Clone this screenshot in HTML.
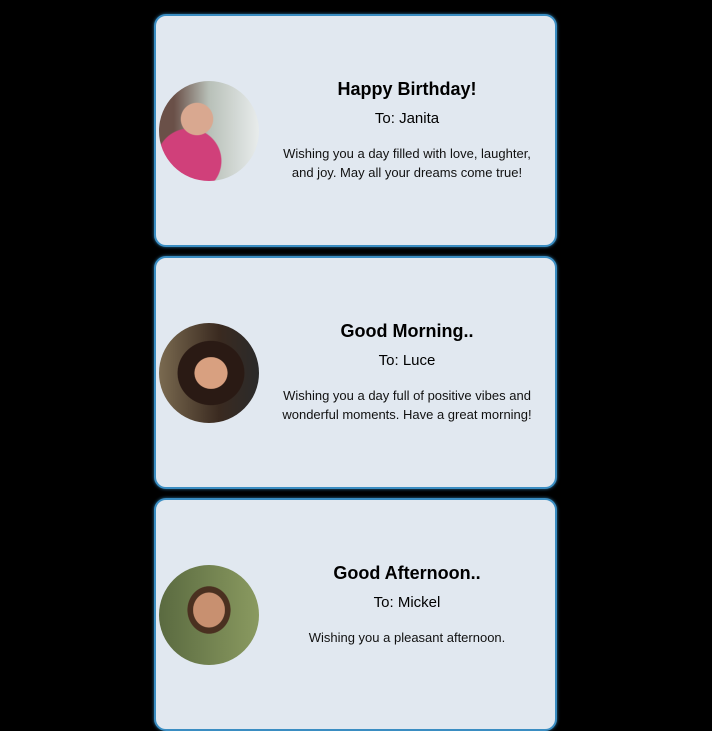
<!DOCTYPE html>
<html><head><style>
html,body{margin:0;background:#000;width:712px;height:612px;overflow:hidden;font-family:"Liberation Sans",sans-serif;}
.card{position:absolute;left:154px;width:399px;height:229px;background:#e1e8f0;border:2px solid #3a8dc2;border-radius:12px;box-shadow:0 0 3px #2a6f9a;}
.av{position:absolute;left:3px;top:65px;width:100px;height:100px;border-radius:50%;}
.txt{position:absolute;left:115px;width:272px;top:61px;text-align:center;color:#000;}
h2{margin:0;font-size:18px;font-weight:bold;line-height:24px;}
h3{margin:7px 0 0;font-size:15px;line-height:22px;font-weight:normal}
p{margin:14px 0 0;font-size:13px;line-height:19px;color:#111;}
</style></head><body>
<div class="card" style="top:14px">
<div class="av" style="background:radial-gradient(circle at 38% 38%,#d9a890 0 18%,transparent 19%),radial-gradient(circle at 30% 80%,#d0407a 0 30%,transparent 31%),linear-gradient(90deg,#6a5048 0 15%,#b8c0b8 50%,#e8ecec 100%)"></div>
<div class="txt"><h2>Happy Birthday!</h2><h3>To: Janita</h3><p>Wishing you a day filled with love, laughter, and joy. May all your dreams come true!</p></div>
</div>
<div class="card" style="top:256px">
<div class="av" style="background:radial-gradient(ellipse at 52% 50%,#d8a080 0 22%,#2a1a14 23% 45%,transparent 46%),linear-gradient(90deg,#7a6a50,#3a2a20 60%,#2a2a2a)"></div>
<div class="txt"><h2>Good Morning..</h2><h3>To: Luce</h3><p>Wishing you a day full of positive vibes and wonderful moments. Have a great morning!</p></div>
</div>
<div class="card" style="top:498px">
<div class="av" style="background:radial-gradient(ellipse at 50% 45%,#c89070 0 22%,#4a3020 23% 30%,transparent 31%),linear-gradient(90deg,#5a6a40,#8a9a60)"></div>
<div class="txt"><h2>Good Afternoon..</h2><h3>To: Mickel</h3><p>Wishing you a pleasant afternoon.</p></div>
</div>
</body></html>
